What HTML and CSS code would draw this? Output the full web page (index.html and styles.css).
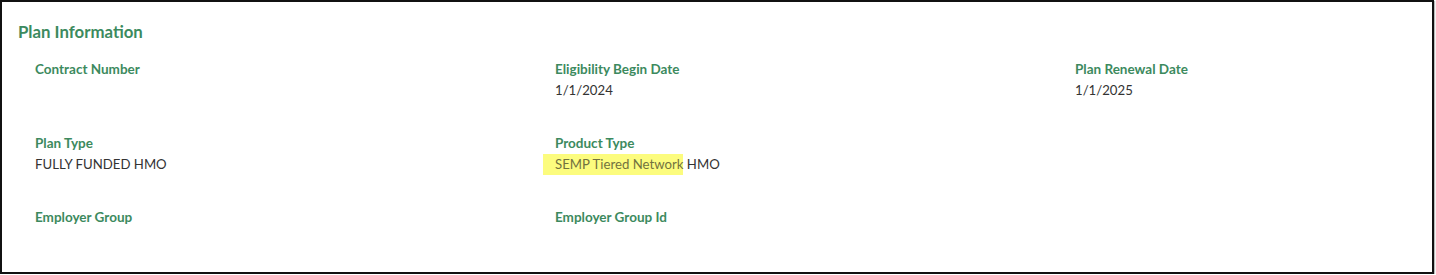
FILE: index.html
```html
<!DOCTYPE html>
<html lang="en">
<head>
    <meta charset="utf-8">
    <link rel="stylesheet" href="styles.css">
</head>
<body>
    <div class="panel">
        <h2 class="panel-title">Plan Information</h2>
        <div class="fields">
            <div class="field">
                <span class="field-label">Contract Number</span>
                <span class="field-value"></span>
            </div>
            <div class="field">
                <span class="field-label">Eligibility Begin Date</span>
                <span class="field-value">1/1/2024</span>
            </div>
            <div class="field">
                <span class="field-label">Plan Renewal Date</span>
                <span class="field-value">1/1/2025</span>
            </div>
            <div class="field">
                <span class="field-label">Plan Type</span>
                <span class="field-value">FULLY FUNDED HMO</span>
            </div>
            <div class="field">
                <span class="field-label">Product Type</span>
                <span class="field-value"><span class="marker">SEMP Tiered Network</span> HMO</span>
            </div>
            <div class="field"></div>
            <div class="field">
                <span class="field-label">Employer Group</span>
                <span class="field-value"></span>
            </div>
            <div class="field">
                <span class="field-label">Employer Group Id</span>
                <span class="field-value"></span>
            </div>
        </div>
    </div>
</body>
</html>
```

FILE: styles.css
```css
body {
    margin: 0;
    background: #fff;
    font-family: Lato, "Open Sans", sans-serif;
}

.panel {
    box-sizing: border-box;
    width: 1434px;
    height: 274px;
    border: 2px solid #111;
    padding: 20px 0 0 16px;
    box-shadow: 1px 1px 1px #bbb;
}

.panel-title {
    margin: 0 0 18px 0;
    font-size: 16.8px;
    line-height: 20px;
    font-weight: 700;
    color: #3c8a5e;
}

.fields {
    margin-left: 17px;
    display: grid;
    grid-template-columns: 520px 520px 1fr;
    grid-auto-rows: 74px;
}

.field-label {
    display: block;
    margin-bottom: 2px;
    font-size: 13.5px;
    line-height: 18px;
    font-weight: 700;
    color: #3c8a5e;
}

.field-value {
    display: block;
    font-size: 13.2px;
    line-height: 20px;
    color: #333;
}

.marker {
    display: inline-block;
    margin-left: -12px;
    padding-left: 12px;
    line-height: 21px;
    background-color: #fcfc7e;
    color: #72723e;
}
```
